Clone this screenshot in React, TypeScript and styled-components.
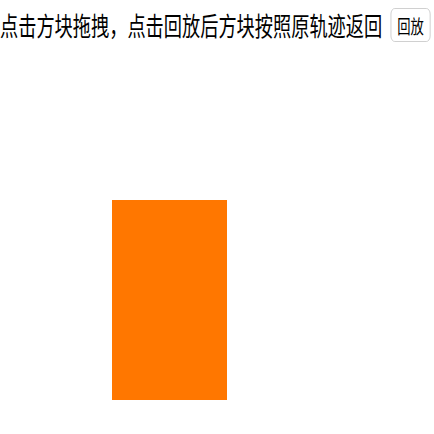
import { useRef, useState } from "react";
import styled, { createGlobalStyle } from "styled-components";

const GlobalStyle = createGlobalStyle`
  html, body {
    margin: 0;
    padding: 0;
    background: #ffffff;
    font-family: "Noto Sans CJK SC", "Noto Sans", sans-serif;
    overflow: hidden;
  }
`;

type Point = { x: number; y: number };

const App = () => {
  const [pos, setPos] = useState<Point>({ x: 0, y: 0 });
  const track = useRef<Point[]>([]);
  const start = useRef<Point | null>(null);

  const onDown = (e: any) => {
    start.current = { x: e.clientX - pos.x, y: e.clientY - pos.y };
    track.current = [pos];
  };
  const onMove = (e: any) => {
    if (!start.current) return;
    const p = { x: e.clientX - start.current.x, y: e.clientY - start.current.y };
    track.current.push(p);
    setPos(p);
  };
  const onUp = () => {
    start.current = null;
  };
  const replay = () => {
    const list = [...track.current].reverse();
    let i = 0;
    const step = () => {
      if (i >= list.length) return;
      setPos(list[i]);
      i++;
      requestAnimationFrame(step);
    };
    step();
  };

  return (
    <>
      <GlobalStyle />
      <Page onMouseMove={onMove} onMouseUp={onUp}>
        <Header>
          <Title>点击方块拖拽，点击回放后方块按照原轨迹返回</Title>
          <ReplayButton onClick={replay}>回放</ReplayButton>
        </Header>
        <Stage>
          <Block
            onMouseDown={onDown}
            style={{ transform: `translate(${pos.x}px, ${pos.y}px)` }}
          />
        </Stage>
      </Page>
    </>
  );
};

export default App;

const Page = styled.div`
  width: 434px;
  height: 434px;
  display: flex;
  flex-direction: column;
`;

const Header = styled.div`
  display: flex;
  align-items: center;
  gap: 12px;
  height: 50px;
  width: 640px;
  transform: scaleX(0.7);
  transform-origin: left center;
  white-space: nowrap;
`;

const Title = styled.span`
  flex-shrink: 0;
  font-size: 26px;
  line-height: 1;
  color: #000000;
`;

const ReplayButton = styled.button`
  flex-shrink: 0;
  font-family: inherit;
  font-size: 19px;
  line-height: 1;
  height: 34px;
  width: 57px;
  padding: 0;
  color: #000000;
  background: #ffffff;
  border: 1px solid #c8c8c8;
  border-radius: 6px;
  cursor: pointer;
`;

const Stage = styled.div`
  flex: 1;
  padding: 150px 0 0 112px;
`;

const Block = styled.div`
  width: 115px;
  height: 200px;
  background: #ff7700;
  cursor: move;
`;
